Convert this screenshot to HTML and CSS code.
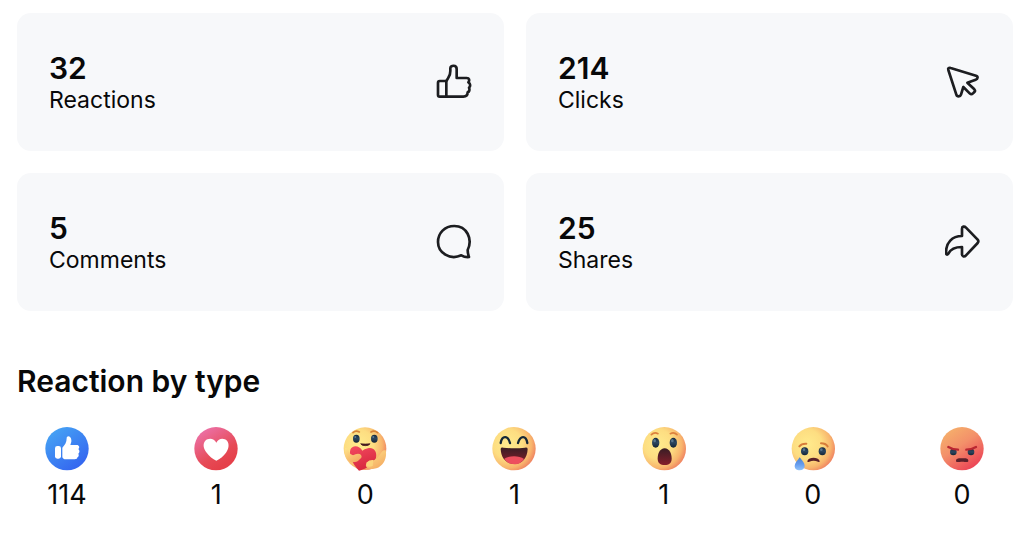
FILE: index.html
```
<!DOCTYPE html>
<html lang="en">
<head>
  <meta charset="UTF-8">
  <meta name="viewport" content="width=device-width, initial-scale=1.0">
  <title>Post Insights</title>
  <link rel="stylesheet" href="styles.css">
</head>
<body>
  <main>
    <section class="stats">
      <div class="card">
        <div>
          <p class="value">32</p>
          <p class="label">Reactions</p>
        </div>
        <svg class="icon" viewBox="36 36 108 108" aria-hidden="true">
          <path d="M67 87 H47 Q42 87 42 92 V129 Q42 134 47 134 H67 Z"/>
          <path d="M67 87 C72 77 80 72 79 57 V49 C79 39 98 38 98 51 V78 H128 C136 78 138 85 133 91 C140 95 140 103 135 107 C138 113 136 119 131 121 C131 129 126 134 118 134 H67"/>
        </svg>
      </div>
      <div class="card">
        <div>
          <p class="value">214</p>
          <p class="label">Clicks</p>
        </div>
        <svg class="icon" viewBox="36 36 108 108" aria-hidden="true">
          <path d="M46 54 C44 49 48 46 53 48 L129 71 C136 73 135 81 128 83 L103 92 L124 112 C127 115 127 117 124 120 L120 124 C116 128 113 127 110 124 L91 105 L84 128 C82 135 72 135 70 128 Z"/>
        </svg>
      </div>
      <div class="card">
        <div>
          <p class="value">5</p>
          <p class="label">Comments</p>
        </div>
        <svg class="icon" viewBox="36 36 108 108" aria-hidden="true">
          <path d="M131 114 C147 80 128 42 91 42 C62 42 42 63 42 90 C42 123 78 145 112 130 Q122 136 135 135 Q131 124 131 114 Z"/>
        </svg>
      </div>
      <div class="card">
        <div>
          <p class="value">25</p>
          <p class="label">Shares</p>
        </div>
        <svg class="icon" viewBox="36 36 108 108" aria-hidden="true">
          <path d="M87 72 V50 C87 43 94 42 99 47 L134 83 Q138 88 134 93 L99 130 C94 136 87 134 87 127 V105 C67 105 53 111 46 125 C43 129 39 129 39 122 C39 92 57 72 87 72 Z"/>
        </svg>
      </div>
    </section>

    <section class="by-type">
      <h2>Reaction by type</h2>
      <ul class="reactions">
        <li>
          <svg class="emoji" viewBox="28 26 132 132" role="img" aria-label="Like">
            <defs>
              <linearGradient id="blue" x1="0.15" y1="0.1" x2="0.75" y2="0.9">
                <stop offset="0" stop-color="#45a1f4"/>
                <stop offset="1" stop-color="#3568f0"/>
              </linearGradient>
            </defs>
            <circle cx="94" cy="91" r="65" fill="url(#blue)"/>
            <rect x="58" y="83" width="18" height="38" rx="7" fill="#fff"/>
            <path fill="#fff" d="M80 88 C88 79 93 73 93 60 C93 51 106 52 107 65 C108 72 105 76 104 80 H123 C131 80 133 88 128 92 C133 96 132 103 128 106 C131 111 128 116 125 117 C126 121 122 123 117 123 H91 C84 123 80 119 80 115 Z"/>
          </svg>
          <span>114</span>
        </li>
        <li>
          <svg class="emoji" viewBox="28 26 132 132" role="img" aria-label="Love">
            <defs>
              <linearGradient id="red" x1="0.15" y1="0.1" x2="0.65" y2="0.9">
                <stop offset="0" stop-color="#ec70a5"/>
                <stop offset="0.7" stop-color="#e64a56"/>
                <stop offset="1" stop-color="#e5404a"/>
              </linearGradient>
            </defs>
            <circle cx="94" cy="91" r="65" fill="url(#red)"/>
            <path fill="#fff" d="M95 73 C88 58 70 59 62 67 C53 77 57 92 66 103 C74 113 84 122 95 127 C106 122 116 113 124 103 C132 92 135 77 127 67 C119 59 102 58 95 73 Z"/>
          </svg>
          <span>1</span>
        </li>
        <li>
          <svg class="emoji" viewBox="28 26 132 132" role="img" aria-label="Care">
            <defs>
              <radialGradient id="yellow" cx="0.36" cy="0.4" r="0.68">
                <stop offset="0" stop-color="#ffeb8d"/>
                <stop offset="0.5" stop-color="#fddd81"/>
                <stop offset="0.8" stop-color="#f8b56d"/>
                <stop offset="1" stop-color="#ef7f60"/>
              </radialGradient>
              <linearGradient id="eye" x1="0" y1="0" x2="0" y2="1">
                <stop offset="0" stop-color="#182b40"/>
                <stop offset="0.5" stop-color="#2c465f"/>
                <stop offset="1" stop-color="#142334"/>
              </linearGradient>
              <linearGradient id="hand" x1="0" y1="0" x2="0.7" y2="1">
                <stop offset="0" stop-color="#ffe58a"/>
                <stop offset="1" stop-color="#f4aa62"/>
              </linearGradient>
              <linearGradient id="heart" x1="0" y1="0" x2="0.4" y2="1">
                <stop offset="0" stop-color="#f34b61"/>
                <stop offset="1" stop-color="#d8273e"/>
              </linearGradient>
            </defs>
            <circle cx="94" cy="91" r="64" fill="url(#yellow)"/>
            <g fill="none" stroke="#d78237" stroke-width="5" stroke-linecap="round">
              <path d="M58 43 Q66 35 77 41"/>
              <path d="M112 41 Q122 35 132 43"/>
            </g>
            <ellipse cx="68" cy="61" rx="10" ry="12" fill="url(#eye)"/>
            <ellipse cx="122" cy="61" rx="10" ry="12" fill="url(#eye)"/>
            <circle cx="65" cy="56" r="3" fill="#5c7c94"/>
            <circle cx="119" cy="56" r="3" fill="#5c7c94"/>
            <path d="M81 76 Q95 78 109 76 Q107 82 95 82 Q83 82 81 76 Z" fill="#45191f" stroke="#45191f" stroke-width="2"/>
            <path d="M86 97 C78 80 55 79 50 94 C45 111 56 136 76 157 C96 152 121 138 127 118 C131 99 119 86 103 90 Q91 92 86 97 Z" fill="url(#heart)"/>
            <path d="M34 90 C33 106 36 124 48 130 C59 135 74 130 79 122 C85 119 86 111 78 107 Q68 105 58 111 Q50 110 46 100 Q42 86 34 90 Z" fill="url(#hand)"/>
            <path d="M156 96 C161 118 150 142 128 150 C112 155 99 151 97 144 C95 137 102 130 110 129 L122 125 Q134 119 140 107 Q147 93 156 96 Z" fill="url(#hand)"/>
            <path d="M119 125 Q106 124 100 132 Q95 139 101 144 Q108 147 117 143" fill="#fbd47c"/>
          </svg>
          <span>0</span>
        </li>
        <li>
          <svg class="emoji" viewBox="28 26 132 132" role="img" aria-label="Haha">
            <defs>
              <linearGradient id="mouth" x1="0" y1="0" x2="0" y2="1">
                <stop offset="0" stop-color="#391d25"/>
                <stop offset="1" stop-color="#851e2a"/>
              </linearGradient>
            </defs>
            <circle cx="94" cy="91" r="65" fill="url(#yellow)"/>
            <g fill="none" stroke="#142737" stroke-width="7" stroke-linecap="round" stroke-linejoin="round">
              <path d="M54 74 C58 50 76 51 82 74"/>
              <path d="M106 74 C113 51 130 50 134 74"/>
            </g>
            <path d="M54 92 Q54 87 62 88 Q94 92 127 88 Q135 87 135 92 C134 120 118 137 95 137 C70 137 55 118 54 92 Z" fill="url(#mouth)"/>
            <path d="M65 122 C78 111 110 111 124 122 C115 134 107 138 95 138 C82 138 73 133 65 122 Z" fill="#ed4f5e"/>
          </svg>
          <span>1</span>
        </li>
        <li>
          <svg class="emoji" viewBox="28 26 132 132" role="img" aria-label="Wow">
            <circle cx="95" cy="91" r="65" fill="url(#yellow)"/>
            <g fill="none" stroke="#dc813e" stroke-width="5" stroke-linecap="round">
              <path d="M56 49 Q65 40 76 46"/>
              <path d="M113 46 Q124 40 133 49"/>
            </g>
            <ellipse cx="69" cy="73" rx="11" ry="15" fill="url(#eye)"/>
            <ellipse cx="122" cy="73" rx="11" ry="15" fill="url(#eye)"/>
            <ellipse cx="66" cy="67" rx="4" ry="5" fill="#58758d"/>
            <ellipse cx="119" cy="67" rx="4" ry="5" fill="#58758d"/>
            <path d="M96 90 C110 90 117 106 117 121 C117 134 109 140 96 140 C83 140 75 134 75 121 C75 106 82 90 96 90 Z" fill="url(#mouth)"/>
          </svg>
          <span>1</span>
        </li>
        <li>
          <svg class="emoji" viewBox="28 26 132 132" role="img" aria-label="Sad">
            <defs>
              <linearGradient id="tear" x1="0" y1="0" x2="0" y2="1">
                <stop offset="0" stop-color="#4f83c9"/>
                <stop offset="0.5" stop-color="#6299ed"/>
                <stop offset="1" stop-color="#92c4fb"/>
              </linearGradient>
            </defs>
            <circle cx="95" cy="91" r="65" fill="url(#yellow)"/>
            <g fill="none" stroke="#d67d3a" stroke-width="6" stroke-linecap="round">
              <path d="M53 84 Q60 75 74 76"/>
              <path d="M118 75 Q132 75 138 84"/>
            </g>
            <ellipse cx="69" cy="99" rx="11" ry="12" fill="url(#eye)"/>
            <ellipse cx="122" cy="99" rx="11" ry="12" fill="url(#eye)"/>
            <circle cx="67" cy="94" r="4" fill="#58758d"/>
            <circle cx="119" cy="94" r="4" fill="#58758d"/>
            <path d="M77 128 C82 115 109 115 114 128 Q115 132 109 130 Q96 125 83 130 Q76 132 77 128 Z" fill="#5a2028"/>
            <path d="M54 117 C62 127 70 136 69 144 C68 152 62 156 54 156 C46 156 39 152 39 143 C39 135 47 127 54 117 Z" fill="url(#tear)"/>
          </svg>
          <span>0</span>
        </li>
        <li>
          <svg class="emoji" viewBox="28 26 132 132" role="img" aria-label="Angry">
            <defs>
              <linearGradient id="orange" x1="0.25" y1="0.1" x2="0.8" y2="0.9">
                <stop offset="0" stop-color="#f5aa6b"/>
                <stop offset="0.4" stop-color="#f3906a"/>
                <stop offset="1" stop-color="#ec4556"/>
              </linearGradient>
            </defs>
            <circle cx="94" cy="91" r="65" fill="url(#orange)"/>
            <circle cx="68" cy="101" r="10" fill="url(#eye)"/>
            <circle cx="121" cy="101" r="10" fill="url(#eye)"/>
            <g fill="none" stroke="#b92631" stroke-width="7" stroke-linecap="round">
              <path d="M53 86 Q67 94 82 94"/>
              <path d="M107 94 Q122 94 136 86"/>
            </g>
            <path d="M76 128 C76 119 86 120 95 120 C104 120 113 119 113 128 C113 134 103 130 95 130 C86 130 76 134 76 128 Z" fill="#5b202b"/>
          </svg>
          <span>0</span>
        </li>
      </ul>
    </section>
  </main>
</body>
</html>
```
FILE: styles.css
```
body {
  margin: 0;
  padding: 13px 19px 24px 17px;
  font-family: Inter, "Liberation Sans", sans-serif;
  background-color: #fff;
  color: #080809;
}
p, h2, ul {
  margin: 0;
  padding: 0;
}
.stats {
  display: grid;
  grid-template-columns: 1fr 1fr;
  gap: 22px;
}
.card {
  display: flex;
  align-items: center;
  justify-content: space-between;
  padding: 37px 32px;
  border-radius: 14px;
  background-color: #f7f8fa;
}
.value {
  font-size: 30px;
  font-weight: 600;
  line-height: 36px;
}
.label {
  font-size: 23px;
  line-height: 28px;
}
.icon {
  width: 36px;
  height: 36px;
  fill: none;
  stroke: #1c1d20;
  stroke-width: 8;
  stroke-linejoin: round;
  stroke-linecap: round;
}
.by-type {
  margin-top: 52px;
}
h2 {
  font-size: 30px;
  font-weight: 600;
  line-height: 36px;
}
.reactions {
  display: flex;
  justify-content: space-between;
  margin-top: 28px;
  padding: 0 29px 0 28px;
  list-style: none;
}
.reactions li {
  display: flex;
  flex-direction: column;
  align-items: center;
  width: 44px;
  gap: 8px;
  font-size: 27px;
  line-height: 32px;
}
.emoji {
  width: 44px;
  height: 44px;
}
```
